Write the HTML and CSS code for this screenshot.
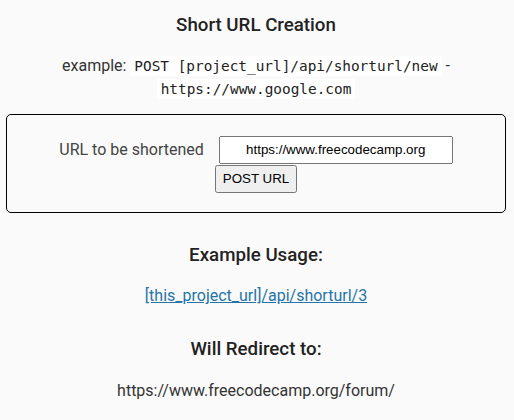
FILE: index.html
```html
<!DOCTYPE html>
<html lang="en">
<head>
<meta charset="utf-8">
<title>URL Shortener Microservice</title>
<link rel="stylesheet" href="styles.css">
</head>
<body>
<main class="container">
  <h3 class="title">Short URL Creation</h3>
  <p class="example">example: <code>POST [project_url]/api/shorturl/new</code> - <code>https://www.google.com</code></p>
  <form class="url-form" action="#" method="post">
    <label class="url-label" for="url_input">URL to be shortened</label>
    <input class="url-input" id="url_input" type="text" name="url" value="https://www.freecodecamp.org">
    <input class="url-submit" type="submit" value="POST URL">
  </form>
  <h3 class="section-title">Example Usage:</h3>
  <p class="usage"><a class="usage-link" href="#">[this_project_url]/api/shorturl/3</a></p>
  <h3 class="section-title">Will Redirect to:</h3>
  <p class="redirect">https://www.freecodecamp.org/forum/</p>
</main>
</body>
</html>
```

FILE: styles.css
```css
html, body {
  margin: 0;
  padding: 0;
}

body {
  font-family: Roboto, "Liberation Sans", sans-serif;
  font-size: 16px;
  line-height: 22.4px;
  color: #222;
  background-color: #fafafa;
  text-align: center;
}

.container {
  padding: 14px 8px 0 6px;
}

.title,
.section-title {
  font-size: 18.72px;
  font-weight: 500;
  margin: 31px 0 18.72px;
}

.title {
  margin-top: 0;
}

.example {
  margin: 0 0 14px;
  color: #333;
}

code {
  font-family: "DejaVu Sans Mono", monospace;
  font-size: 14.4px;
  padding: 2px 4px;
  background-color: #fff;
  color: #222;
}

.url-form {
  display: flex;
  flex-wrap: wrap;
  justify-content: center;
  align-items: center;
  column-gap: 15px;
  row-gap: 1px;
  padding: 21px 20px 19px;
  border: 1px solid #000;
  border-radius: 5px;
  margin: 0;
}

.url-label {
  color: #444;
}

.url-input {
  box-sizing: border-box;
  width: 234px;
  height: 28px;
  margin: 0;
  text-align: center;
  font-family: "Liberation Sans", Arial, sans-serif;
  font-size: 13.33px;
}

.url-submit {
  box-sizing: border-box;
  height: 28px;
  margin: 0;
  padding: 1px 6px;
  font-family: "Liberation Sans", Arial, sans-serif;
  font-size: 13.33px;
}

.usage,
.redirect {
  margin: 0;
}

.usage-link {
  color: #2574a9;
}

.redirect {
  color: #333;
}
```
